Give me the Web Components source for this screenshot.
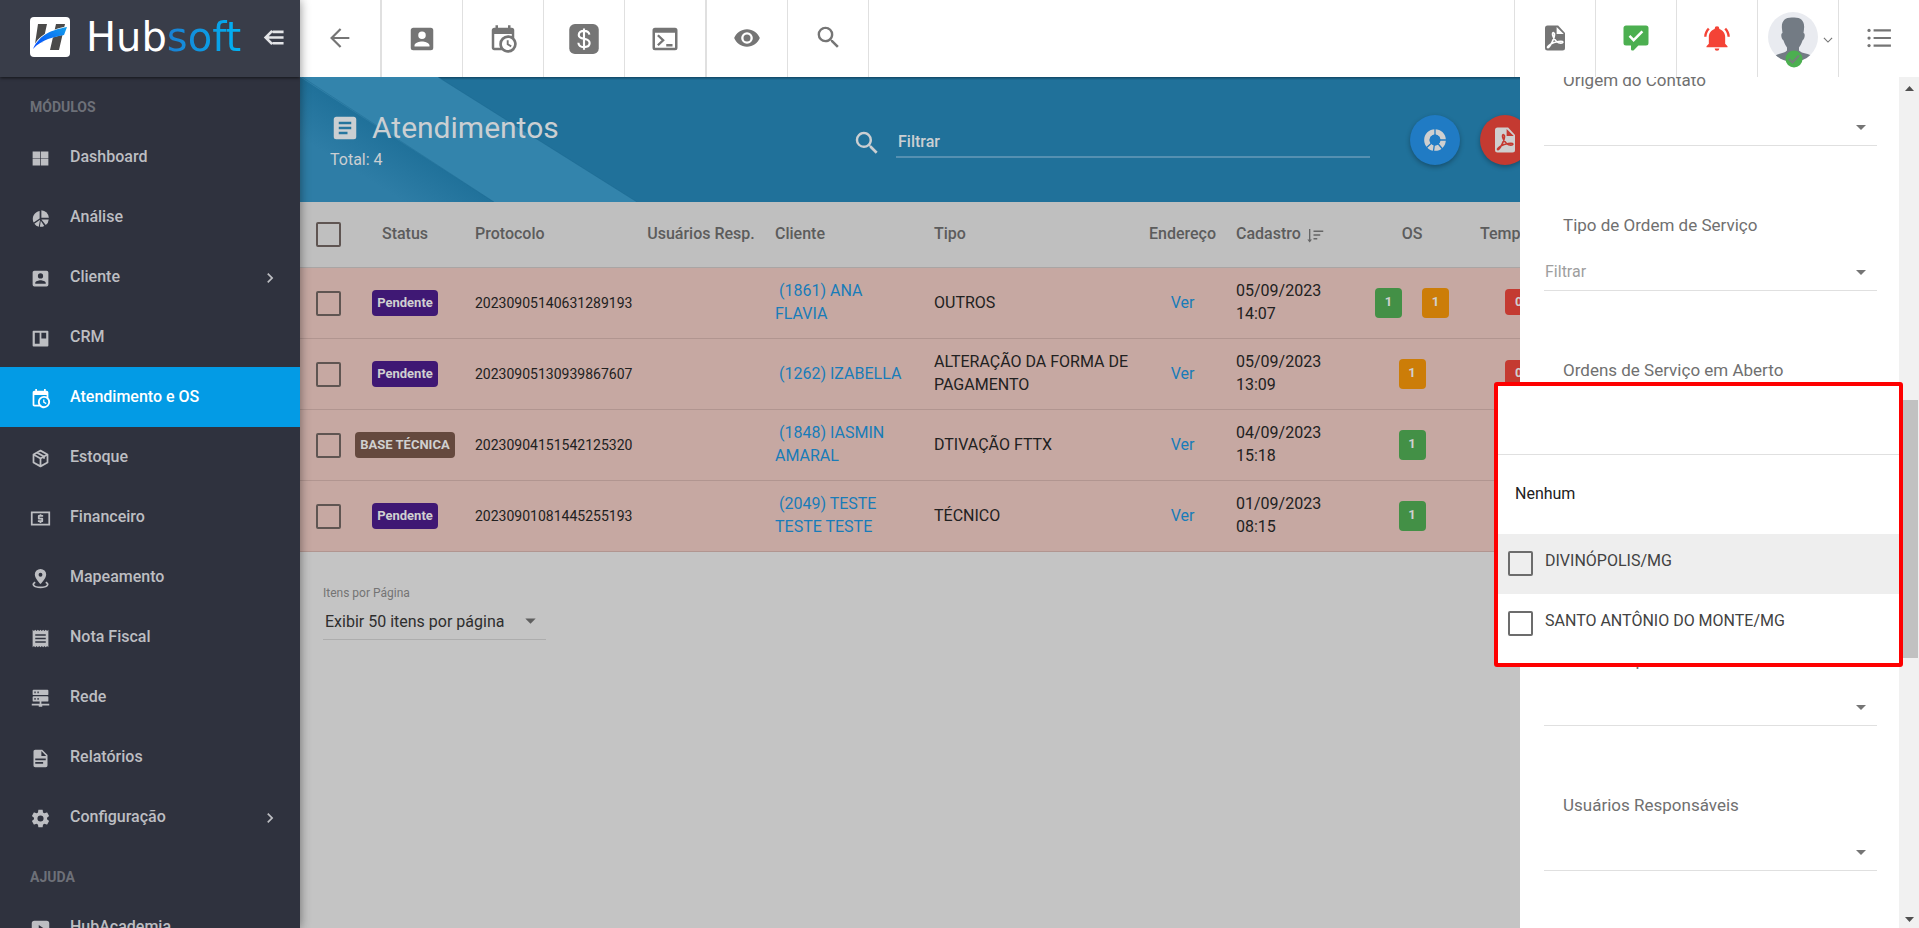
<!DOCTYPE html>
<html lang="pt-BR">
<head>
<meta charset="utf-8">
<title>Hubsoft - Atendimentos</title>
<style>
  html, body { margin: 0; height: 100%; }
  body { font-family: Roboto, "Noto Sans", sans-serif; font-size: 16px; color: #212121; overflow: hidden; }
</style>
</head>
<body>
<hs-app></hs-app>

<script>
const ICONS = {
  dashboard: '<path d="M3 4h8.6v7.6H3zM12.4 4H21v7.6h-8.600zM3 12.400h8.600V20H3zM12.400 12.400H21V20h-8.600z"/>',
  pie: '<path d="M13 2.500A9 9 0 0 1 21.500 11H13z"/><path d="M11 3.500V12L4.200 16.600A9 9 0 0 1 11 3.500zM11.500 13.500l-1.500 8A9 9 0 0 1 5 18zM13 13h8.400a9 9 0 0 1-3.400 6.500zM12.300 14.500l4 6a9 9 0 0 1-5 1z"/>',
  account: '<path d="M6,17C6,15 10,13.9 12,13.9C14,13.9 18,15 18,17V18H6M15,9A3,3 0 0,1 12,12A3,3 0 0,1 9,9A3,3 0 0,1 12,6A3,3 0 0,1 15,9M3,5V19A2,2 0 0,0 5,21H19A2,2 0 0,0 21,19V5A2,2 0 0,0 19,3H5C3.89,3 3,3.9 3,5Z"/>',
  board: '<path fill-rule="evenodd" d="M4 3H20A1 1 0 0 1 21 4V20A1 1 0 0 1 20 21H4A1 1 0 0 1 3 20V4A1 1 0 0 1 4 3M5.500 5.500V18H11V5.500zM13 5.500V12H18.500V5.500z"/>',
  calendar: '<path d="M15,13H16.5V15.82L18.94,17.23L18.19,18.53L15,16.69V13M19,8H5V19H9.67C9.24,18.09 9,17.07 9,16A7,7 0 0,1 16,9C17.07,9 18.09,9.24 19,9.67V8M5,21C3.89,21 3,20.1 3,19V5C3,3.89 3.89,3 5,3H6V1H8V3H16V1H18V3H19A2,2 0 0,1 21,5V11.1C22.24,12.36 23,14.09 23,16A7,7 0 0,1 16,23C14.09,23 12.36,22.24 11.1,21H5M16,11.15A4.85,4.85 0 0,0 11.15,16C11.15,18.68 13.32,20.85 16,20.85A4.85,4.85 0 0,0 20.85,16C20.85,13.32 18.68,11.15 16,11.15Z"/>',
  cube: '<path fill="none" stroke="currentColor" stroke-width="2" stroke-linejoin="round" d="M12 3l8 4.500v9L12 21l-8-4.500v-9zM4 7.500l8 4.500 8-4.500M12 12v9M8 5.300l8 4.500M16 9.800v2.500"/>',
  cash: '<path fill="none" stroke="currentColor" stroke-width="2" d="M2 5H22V19H2z"/><path d="M11 7h2v1h2v2h-4v1h3a1 1 0 0 1 1 1v3a1 1 0 0 1-1 1h-1v1h-2v-1H9v-2h4v-1h-3a1 1 0 0 1-1-1V9a1 1 0 0 1 1-1h1z"/>',
  pin: '<path fill-rule="evenodd" d="M12 1a6.500 6.500 0 0 1 6.500 6.500C18.500 12 12 18.500 12 18.500S5.500 12 5.500 7.500A6.500 6.500 0 0 1 12 1m0 4.500a2.200 2.200 0 1 0 0 4.400a2.200 2.200 0 0 0 0-4.400"/><path fill="none" stroke="currentColor" stroke-width="2" d="M6 16.200C1.500 18.500 4 22 12 22s10.500-3.500 6-5.800"/>',
  receipt: '<path fill-rule="evenodd" d="M3 2l1.500 1.300L6 2l1.500 1.300L9 2l1.500 1.300L12 2l1.500 1.300L15 2l1.500 1.300L18 2l1.500 1.300L21 2v20l-1.500-1.300L18 22l-1.500-1.300L15 22l-1.500-1.300L12 22l-1.500-1.300L9 22l-1.500-1.300L6 22l-1.500-1.300L3 22zM6 7v1.800h12V7zM6 11v1.800h12V11zM6 15v1.800h12V15z"/>',
  server: '<path fill-rule="evenodd" d="M4 2h16a1 1 0 0 1 1 1v4a1 1 0 0 1-1 1H4a1 1 0 0 1-1-1V3a1 1 0 0 1 1-1M5 4v2h1.500V4zM8.500 4v2H10V4zM4 9.500h16a1 1 0 0 1 1 1v4a1 1 0 0 1-1 1H4a1 1 0 0 1-1-1v-4a1 1 0 0 1 1-1M5 11.500v2h1.500v-2zM8.500 11.500v2H10v-2zM11 15.500h2V18h9v2h-8v1.500h-4V20H2v-2h9z"/>',
  file: '<path d="M13,9H18.5L13,3.5V9M6,2H14L20,8V20A2,2 0 0,1 18,22H6C4.89,22 4,21.1 4,20V4C4,2.89 4.89,2 6,2M15,18V16H6V18H15M18,14V12H6V14H18Z"/>',
  cog: '<path d="M12,15.5A3.5,3.5 0 0,1 8.5,12A3.5,3.5 0 0,1 12,8.5A3.5,3.5 0 0,1 15.5,12A3.5,3.5 0 0,1 12,15.5M19.43,12.97C19.47,12.65 19.5,12.33 19.5,12C19.5,11.67 19.47,11.34 19.43,11L21.54,9.37C21.73,9.22 21.78,8.95 21.66,8.73L19.66,5.27C19.54,5.05 19.27,4.96 19.05,5.05L16.56,6.05C16.04,5.66 15.5,5.32 14.87,5.07L14.5,2.42C14.46,2.18 14.25,2 14,2H10C9.75,2 9.54,2.18 9.5,2.42L9.13,5.07C8.5,5.32 7.96,5.66 7.44,6.05L4.95,5.05C4.73,4.96 4.46,5.05 4.34,5.27L2.34,8.73C2.21,8.95 2.27,9.22 2.46,9.37L4.57,11C4.53,11.34 4.5,11.67 4.5,12C4.5,12.33 4.53,12.65 4.57,12.97L2.46,14.63C2.27,14.78 2.21,15.05 2.34,15.27L4.34,18.73C4.46,18.95 4.73,19.03 4.95,18.95L7.44,17.94C7.96,18.34 8.5,18.68 9.13,18.93L9.5,21.58C9.54,21.82 9.75,22 10,22H14C14.25,22 14.46,21.82 14.5,21.58L14.87,18.93C15.5,18.67 16.04,18.34 16.56,17.94L19.05,18.95C19.27,19.03 19.54,18.95 19.66,18.73L21.66,15.27C21.78,15.05 21.73,14.78 21.54,14.63L19.43,12.97Z"/>',
  video: '<path fill-rule="evenodd" d="M5 3h14a3 3 0 0 1 3 3v12a3 3 0 0 1-3 3H5a3 3 0 0 1-3-3V6a3 3 0 0 1 3-3M10 8v8l6-4z"/>',
  chevron: '<path d="M8.590,16.580L13.170,12L8.590,7.410L10,6L16,12L10,18L8.590,16.580Z"/>',
  chevronDown: '<path fill="none" stroke="currentColor" stroke-width="2" d="M5 8.500l7 7 7-7"/>',
  back: '<path fill="none" stroke="currentColor" stroke-width="1.900" d="M20 12H5.500M12.500 4.300L4.800 12l7.700 7.700"/>',
  money: '<rect x="0.200" y="0" width="23.600" height="24" rx="4.500"/><path fill="none" stroke="#fff" stroke-width="1.700" d="M16.300 8.500C16 6.300 14.500 5.500 12 5.500S7.800 6.700 7.800 8.700C7.800 13.200 16.500 10.500 16.500 15.200C16.500 17.300 14.800 18.500 12 18.500S7.700 17.300 7.500 15M12 3.500v17"/>',
  console: '<path fill-rule="evenodd" d="M4 3H20A2 2 0 0 1 22 5V19A2 2 0 0 1 20 21H4A2 2 0 0 1 2 19V5A2 2 0 0 1 4 3M4 7V19H20V7z"/><path fill="none" stroke="currentColor" stroke-width="1.900" d="M6.300 9l4.200 4-4.200 4M13 17h5"/>',
  eye: '<path d="M12,9A3,3 0 0,0 9,12A3,3 0 0,0 12,15A3,3 0 0,0 15,12A3,3 0 0,0 12,9M12,17A5,5 0 0,1 7,12A5,5 0 0,1 12,7A5,5 0 0,1 17,12A5,5 0 0,1 12,17M12,4.5C7,4.5 2.73,7.61 1,12C2.73,16.39 7,19.5 12,19.5C17,19.5 21.27,16.39 23,12C21.27,7.61 17,4.5 12,4.5Z"/>',
  magnify: '<path d="M9.5,3A6.5,6.5 0 0,1 16,9.5C16,11.11 15.41,12.59 14.44,13.73L14.71,14H15.5L20.5,19L19,20.5L14,15.5V14.71L13.73,14.44C12.59,15.41 11.11,16 9.5,16A6.5,6.5 0 0,1 3,9.5A6.5,6.5 0 0,1 9.5,3M9.5,5C7,5 5,7 5,9.5C5,12 7,14 9.5,14C12,14 14,12 14,9.5C14,7 12,5 9.5,5Z"/>',
  pdf: '<path d="M6 2H14.500L20 8V20A2 2 0 0 1 18 22H6A2 2 0 0 1 4 20V4A2 2 0 0 1 6 2"/><path fill="var(--icon-cut,#fff)" d="M13.300 3.200V8.800H19z"/><path fill="none" stroke="var(--icon-cut,#fff)" stroke-width="1.300" stroke-linejoin="round" d="M10.900 7.800C9.300 7 9.800 12.200 13.300 14.900C15.500 16.600 18.500 16.300 18.300 15.200C18 14 12 14.800 8.500 16.900C6 18.400 5.500 19.700 6.400 19.700C8 19.500 11.800 12 11.600 8.800C11.500 8.200 11.300 7.900 10.900 7.800z"/>',
  chat: '<path d="M9,22A1,1 0 0,1 8,21V18H4A2,2 0 0,1 2,16V4C2,2.89 2.9,2 4,2H20A2,2 0 0,1 22,4V16A2,2 0 0,1 20,18H13.9L10.2,21.71C10,21.9 9.75,22 9.5,22H9"/><path fill="none" stroke="#fff" stroke-width="2" d="M6.800 10.300l3.300 3.400 7-7"/>',
  bell: '<path d="M21,19V20H3V19L5,17V11C5,7.9 7.03,5.17 10,4.29C10,4.19 10,4.1 10,4A2,2 0 0,1 12,2A2,2 0 0,1 14,4C14,4.1 14,4.19 14,4.29C16.97,5.17 19,7.9 19,11V17L21,19M14,21A2,2 0 0,1 12,23A2,2 0 0,1 10,21M19.75,3.19L18.33,4.61C20.04,6.3 21,8.6 21,11H23C23,8.07 21.84,5.25 19.75,3.19M1,11H3C3,8.6 3.96,6.3 5.67,4.61L4.25,3.19C2.16,5.25 1,8.07 1,11Z"/>',
  list: '<path d="M7 4H23V6H7zM7 11H23V13H7zM7 18H23V20H7z"/><circle cx="2.800" cy="5" r="1.500"/><circle cx="2.800" cy="12" r="1.500"/><circle cx="2.800" cy="19" r="1.500"/>',
  article: '<path d="M14,17H7V15H14M17,13H7V11H17M17,9H7V7H17M19,3H5C3.89,3 3,3.89 3,5V19A2,2 0 0,0 5,21H19A2,2 0 0,0 21,19V5C21,3.89 20.1,3 19,3Z"/>',
  donut: '<circle cx="12" cy="12" r="7.500" fill="none" stroke="currentColor" stroke-width="5"/><path stroke="var(--icon-cut)" stroke-width="1.200" d="M12 12V1M12 12H23M12 12l7.500 9M12 12l-1.500 11M12 12l-9 8"/><circle cx="12" cy="12" r="5" fill="var(--icon-cut)"/>',
  sort: '<path d="M4 4h1.800v14h2.200L4.900 22 1.800 18H4zM10 6h13v2H10zM10 11h9v2h-9zM10 16h5v2h-5z"/>',
  collapse: '<path fill="none" stroke="currentColor" stroke-width="3" d="M10.500 4.500L3 12l7.500 7.500M4 12h19.500M11 5.500h12.500M11 18.500h12.500"/>',
  caret: '<path d="M7,10L12,15L17,10H7Z"/>'
};

const define = (name, css, html) => customElements.define(name, class extends HTMLElement {
  constructor() {
    super();
    this.attachShadow({ mode: 'open' });
  }
  connectedCallback() {
    const markup = typeof html === 'function' ? html(this) : html;
    this.shadowRoot.innerHTML = `<style>*{box-sizing:border-box}${css}</style>${markup}`;
  }
});

define('hs-icon', `
  :host { display: inline-block; flex: none; }
  svg { display: block; fill: currentColor; }`,
  el => {
    const s = el.getAttribute('size') || 24;
    return `<svg width="${s}" height="${s}" viewBox="0 0 24 24" aria-hidden="true">${ICONS[el.getAttribute('name')]}</svg>`;
  });

/* Sidebar */
define('hs-nav-item', `
  :host { display: block; }
  a { display: flex; align-items: center; height: 60px; padding: 0 20px 0 30px; color: #bdbec2; font-weight: 500; text-decoration: none; }
  a.active { background: #039be5; color: #fff; }
  hs-icon { padding-top: 2px; }
  span { flex: 1; padding: 0 0 2px 19px; }`,
  el => `<a href="#" class="${el.hasAttribute('active') ? 'active' : ''}">
    <hs-icon name="${el.getAttribute('icon')}" size="21"></hs-icon>
    <span><slot></slot></span>
    ${el.hasAttribute('more') ? '<hs-icon name="chevron" size="20"></hs-icon>' : ''}
  </a>`);

define('hs-brand', `
  :host { display: flex; align-items: center; height: 77px; padding: 0 16px 3px 30px; background: #393d49; color: #fff;
    box-shadow: 0 1px 3px rgba(0,0,0,.6); position: relative; }
  .tile { flex: none; display: block; }
  .word { flex: 1; padding-left: 16px; font: 40px/44px "DejaVu Sans", sans-serif; }
  .soft { background: linear-gradient(90deg, #1b7fd1, #00b2f3); -webkit-background-clip: text; background-clip: text; color: transparent; }
  button { border: 0; padding: 3px 0 0; background: none; color: #e4e5e8; }`,
  `<svg class="tile" width="40" height="40" viewBox="0 0 40 40" aria-hidden="true">
    <defs><linearGradient id="g" x1="0" y1="1" x2="1" y2="0"><stop offset="0" stop-color="#0448ff"/><stop offset="1" stop-color="#13a0ea"/></linearGradient></defs>
    <rect width="40" height="40" rx="4" fill="#fff"/>
    <path fill="#4b4a49" d="M8 7h9l-4 18-8 2zM26 7h9l-6 26h-9z"/>
    <path fill="#fff" d="M2 33C8 17 20 13 38 9l-2 8c-10 3-23 4-34 17z"/>
    <path fill="url(#g)" d="M3 32C10 17 22 13 37 10l-3 8C24 20 12 22 3 32z"/>
  </svg>
  <div class="word">Hub<span class="soft">soft</span></div>
  <button aria-label="Recolher menu"><hs-icon name="collapse" size="21"></hs-icon></button>`);

define('hs-sidebar', `
  :host { display: block; background: #2f323e; overflow: hidden; height: 100%; }
  h2 { margin: 0; height: 50px; padding: 20px 30px 0; font-size: 14px; line-height: 20px; font-weight: 700; color: #6d7078; }`,
  `<hs-brand></hs-brand>
  <nav aria-label="Principal">
    <h2>MÓDULOS</h2>
    <hs-nav-item icon="dashboard">Dashboard</hs-nav-item>
    <hs-nav-item icon="pie">Análise</hs-nav-item>
    <hs-nav-item icon="account" more>Cliente</hs-nav-item>
    <hs-nav-item icon="board">CRM</hs-nav-item>
    <hs-nav-item icon="calendar" active>Atendimento e OS</hs-nav-item>
    <hs-nav-item icon="cube">Estoque</hs-nav-item>
    <hs-nav-item icon="cash">Financeiro</hs-nav-item>
    <hs-nav-item icon="pin">Mapeamento</hs-nav-item>
    <hs-nav-item icon="receipt">Nota Fiscal</hs-nav-item>
    <hs-nav-item icon="server">Rede</hs-nav-item>
    <hs-nav-item icon="file">Relatórios</hs-nav-item>
    <hs-nav-item icon="cog" more>Configuração</hs-nav-item>
    <h2>AJUDA</h2>
    <hs-nav-item icon="video">HubAcademia</hs-nav-item>
  </nav>`);

/* Top bar */
define('hs-tool', `
  :host { display: block; width: 81px; border-right: 1px solid #e0e0e0; }
  :host([wide]) { width: 82px; border-right-width: 2px; }
  :host([last]) { width: 80px; border: 0; }
  button { display: flex; align-items: center; justify-content: center; width: 100%; height: 100%; border: 0; padding: 0; background: none; color: inherit; }
  :host([raised]) button { padding-bottom: 2px; }`,
  el => `<button aria-label="${el.getAttribute('label')}"><hs-icon name="${el.getAttribute('icon')}" size="${el.getAttribute('size') || 30}"></hs-icon></button>`);

define('hs-user', `
  :host { display: block; width: 81px; border-right: 1px solid #e0e0e0; }
  button { display: flex; align-items: center; gap: 3px; width: 100%; height: 100%; border: 0; padding: 2px 0 0 10px; background: none; color: #757575; }
  svg { display: block; flex: none; }`,
  `<button aria-label="Usuário">
    <svg width="50" height="56" viewBox="0 0 50 56" aria-hidden="true">
      <clipPath id="c"><circle cx="25" cy="25" r="25"/></clipPath>
      <circle cx="25" cy="25" r="25" fill="#e9ebf0"/>
      <path clip-path="url(#c)" fill="#737b84" d="M14 17C13 9 17 5 25 5.500C33 5 37 9 36 17l-.5 4c2 0 1.500 6-1 7.500C33.500 32 32 34 31 35.500v3C34 42 41 41 45 45L25 58 5 45C9 41 16 42 19 38.500v-3C18 34 16.500 32 15.500 28.500C13 27 12.500 21 14.500 21z"/>
      <circle cx="26" cy="47" r="8.500" fill="#4caf50"/>
      <path fill="none" stroke="#73807a" stroke-width="2" d="M21 47l3.500 3.500 6.500-7"/>
    </svg>
    <hs-icon name="chevronDown" size="14"></hs-icon>
  </button>`);

define('hs-toolbar', `
  :host { display: flex; height: 77px; background: #fff; color: #757575; }
  .space { flex: 1; border-right: 1px solid #e0e0e0; }
  .green { color: #4caf50; } .red { color: #f44336; }`,
  `<hs-tool wide raised icon="back" size="28" label="Voltar"></hs-tool>
  <hs-tool icon="account" label="Cliente"></hs-tool>
  <hs-tool icon="calendar" label="Atendimento"></hs-tool>
  <hs-tool icon="money" label="Financeiro"></hs-tool>
  <hs-tool wide icon="console" label="Terminal"></hs-tool>
  <hs-tool raised icon="eye" size="28" label="Visualizar"></hs-tool>
  <hs-tool raised icon="magnify" size="29" label="Pesquisar"></hs-tool>
  <div class="space"></div>
  <hs-tool raised icon="pdf" label="PDF"></hs-tool>
  <hs-tool raised class="green" icon="chat" label="Mensagens"></hs-tool>
  <hs-tool raised class="red" icon="bell" size="28" label="Notificações"></hs-tool>
  <hs-user></hs-user>
  <hs-tool last raised icon="list" size="26" label="Menu"></hs-tool>`);

/* Page heading */
define('hs-page-header', `
  :host { display: grid; grid-template-columns: 552px 518px 1fr; align-items: center; height: 125px; color: #cbcfd2; --blue: #20719a;
    background: linear-gradient(180deg, rgba(0,30,50,.5) 0, transparent 3px), var(--blue); position: relative; isolation: isolate; }
  .bands { position: absolute; inset: 0 auto 0 0; z-index: -1; }
  .title { padding: 0 0 2px 30px; }
  h1 { margin: 0; display: flex; align-items: center; gap: 12px; font-size: 30px; line-height: 40px; font-weight: 400; }
  p { margin: 2px 0 0; line-height: 20px; }
  .search { display: flex; align-items: center; gap: 14px; padding-top: 4px; }
  .search hs-icon { padding-top: 2px; }
  input { flex: 1; min-width: 0; height: 32px; border: 0; border-bottom: 2px solid #5590b1; padding: 2px 2px 0; background: none; color: inherit; font: 500 16px Roboto, sans-serif; outline: 0; }
  input::placeholder { color: inherit; opacity: 1; }
  .actions { display: flex; gap: 20px; padding-left: 40px; }
  .actions button { width: 50px; height: 50px; border: 0; border-radius: 50%; padding: 0; display: flex; align-items: center; justify-content: center; color: #cfcfcf;
    background: var(--icon-cut); box-shadow: 0 2px 5px rgba(0,0,0,.3); }
  .b { --icon-cut: #207bc4; } .r { --icon-cut: #c43a31; }`,
  `<svg class="bands" width="340" height="125" viewBox="0 0 340 125" aria-hidden="true">
    <defs><linearGradient id="s" gradientUnits="userSpaceOnUse" x1="96" y1="62" x2="70" y2="104"><stop offset="0" stop-color="#20719a"/><stop offset="1" stop-color="#2e7da6"/></linearGradient></defs>
    <path fill="url(#s)" d="M0 0H4L194 125H0z"/><path fill="#3384ac" d="M0 0H138L337 125H194z"/>
    <path fill="none" stroke="#1a658b" stroke-opacity=".4" d="M138 0L337 125M2 0L194 125"/>
  </svg>
  <div class="title"><h1><hs-icon name="article" size="30"></hs-icon><span>Atendimentos</span></h1><p>Total: 4</p></div>
  <div class="search"><hs-icon name="magnify" size="30"></hs-icon><input type="text" placeholder="Filtrar" aria-label="Filtrar"></div>
  <div class="actions"><button class="b" aria-label="Gráfico"><hs-icon name="donut" size="26"></hs-icon></button><button class="r" aria-label="Exportar PDF"><hs-icon name="pdf" size="30"></hs-icon></button></div>`);

/* Table */
define('hs-badge', `
  :host { display: inline-block; height: 26px; padding: 0 5px; border-radius: 4px; font-size: 13px; line-height: 25px; font-weight: 700; color: #d0d0d0; background: #c43a31; vertical-align: middle; white-space: nowrap; }
  :host([tone=purple]) { background: #3f1874; }
  :host([tone=brown]) { background: #65493e; }
  :host([tone=green]), :host([tone=orange]) { height: 30px; width: 27px; padding: 0; text-align: center; line-height: 28px; margin: 0 10px; background: #439046; }
  :host([tone=orange]) { background: #cc7d08; }
  :host([tone=red]) { margin-left: 25px; padding: 0 10px; }`,
  '<slot></slot>');

const ROWS = [
  ['purple', 'Pendente', '20230905140631289193', '(1861) ANA FLAVIA', 'OUTROS', '05/09/2023 14:07', ['green', 'orange'], '0'],
  ['purple', 'Pendente', '20230905130939867607', '(1262) IZABELLA', 'ALTERAÇÃO DA FORMA DE PAGAMENTO', '05/09/2023 13:09', ['orange'], '0'],
  ['brown', 'BASE TÉCNICA', '20230904151542125320', '(1848) IASMIN AMARAL', 'DTIVAÇÃO FTTX', '04/09/2023 15:18', ['green'], ''],
  ['purple', 'Pendente', '20230901081445255193', '(2049) TESTE TESTE TESTE', 'TÉCNICO', '01/09/2023 08:15', ['green'], '']
];
const CHECK = `
  input[type=checkbox] { appearance: none; display: block; flex: none; margin: 0; width: 25px; height: 25px; border: 2px solid currentColor; border-radius: 2px; color: inherit; }`;

define('hs-table', `
  :host { display: block; overflow: hidden; }
  table { width: 100%; table-layout: fixed; border-spacing: 0; }
  col:nth-child(1) { width: 45px; } col:nth-child(2) { width: 120px; } col:nth-child(3) { width: 172px; }
  col:nth-child(4) { width: 128px; } col:nth-child(5) { width: 159px; } col:nth-child(6) { width: 215px; }
  col:nth-child(7) { width: 87px; } col:nth-child(8) { width: 128px; } col:nth-child(9) { width: 116px; }
  th, td { padding: 0 4px 0 10px; text-align: left; line-height: 23px; vertical-align: middle; border-bottom: 1px solid #b19590; }
  th { height: 66px; background: #bfbfbf; color: #5c5c5c; font-weight: 500; white-space: nowrap; border-color: #a9a5a4; }
  th span { display: block; padding-bottom: 3px; }
  td { height: 71px; background: #c6a8a2; padding-bottom: 2px; }
  th:first-child, td:first-child { padding: 0 0 0 16px; color: #5f5552; }
  .c { text-align: center; padding: 0; }
  td.c.text { padding-bottom: 2px; }
  .num { font-size: 14px; padding: 0 0 0 10px; }
  .sort { color: #666; vertical-align: middle; padding: 2px 0 0 5px; }
  a { color: #187cb9; text-decoration: none; display: block; }
  .client { text-indent: 4px; padding-right: 6px; }
  ${CHECK}`,
  `<table>
    <colgroup><col><col><col><col><col><col><col><col><col><col></colgroup>
    <thead><tr>
      <th><input type="checkbox" aria-label="Selecionar todos"></th><th class="c"><span>Status</span></th><th><span>Protocolo</span></th><th class="c"><span>Usuários Resp.</span></th>
      <th><span>Cliente</span></th><th><span>Tipo</span></th><th class="c"><span>Endereço</span></th><th><span>Cadastro<hs-icon class="sort" name="sort" size="18"></hs-icon></span></th><th class="c"><span>OS</span></th><th><span>Tempo</span></th>
    </tr></thead>
    <tbody>${ROWS.map(([tone, st, prot, cli, tipo, cad, os, t]) => `<tr>
      <td><input type="checkbox" aria-label="Selecionar ${prot}"></td><td class="c"><hs-badge tone="${tone}">${st}</hs-badge></td>
      <td class="num">${prot}</td><td></td><td><a class="client" href="#">${cli}</a></td><td>${tipo}</td><td class="c text"><a href="#">Ver</a></td>
      <td>${cad.replace(' ', '<br>')}</td><td class="c">${os.map(o => `<hs-badge tone="${o}">1</hs-badge>`).join('')}</td><td>${t ? `<hs-badge tone="red">${t}</hs-badge>` : ''}</td>
    </tr>`).join('')}</tbody>
  </table>`);

define('hs-pager', `
  :host { display: block; padding: 33px 23px; }
  label { display: block; font-size: 12px; line-height: 16px; color: #747474; }
  .box { display: grid; width: 223px; height: 39px; border-bottom: 1px solid #adadad; color: #5f5f5f; align-items: center; }
  .box > * { grid-area: 1 / 1; }
  select { appearance: none; border: 0; background: none; width: 100%; padding: 2px 0 0 2px; font: 16px Roboto, sans-serif; color: #2e2e2e; }
  hs-icon { justify-self: end; padding-right: 3px; pointer-events: none; }`,
  `<label for="n">Itens por Página</label>
  <div class="box"><select id="n"><option>Exibir 50 itens por página</option></select><hs-icon name="caret" size="25"></hs-icon></div>`);

/* Filter drawer */
define('hs-field', `
  :host { display: block; height: 145px; flex: none; }
  label { display: block; padding-left: 19px; font-size: 17px; line-height: 24px; color: #707070; }
  .box { display: grid; align-items: center; margin-top: 18px; height: 36px; padding-bottom: 2px; border-bottom: 1px solid #e0e0e0; color: #757575; }
  .box > * { grid-area: 1 / 1; }
  select { appearance: none; border: 0; width: 100%; background: none; padding: 0 0 0 1px; font: 16px Roboto, sans-serif; color: #9e9e9e; }
  hs-icon { justify-self: end; padding-right: 4px; pointer-events: none; }`,
  el => `<label for="f">${el.getAttribute('label')}</label>
  <div class="box"><select id="f"><option>${el.getAttribute('value') || ''}</option></select><hs-icon name="caret" size="24"></hs-icon></div>`);

define('hs-scrollbar', `
  :host { display: flex; flex-direction: column; width: 20px; background: #f1f1f1; color: #505050; }
  svg { display: block; fill: currentColor; }
  .before { flex: 303; } .thumb { flex: 258; margin: 0 1px 0 2px; background: #c1c1c1; } .after { flex: 250; }`,
  `<svg width="20" height="20" aria-hidden="true"><path d="M6 14H15L10.500 9z"/></svg>
  <div class="before"></div><div class="thumb"></div><div class="after"></div>
  <svg width="20" height="20" aria-hidden="true"><path d="M6 9H15L10.500 14z"/></svg>`);

define('hs-drawer', `
  :host { display: flex; background: #fff; overflow: hidden; }
  .fields { flex: 1; display: flex; flex-direction: column; margin-top: -9px; padding: 0 22px 0 24px; }`,
  `<div class="fields">
    <hs-field label="Origem do Contato"></hs-field>
    <hs-field label="Tipo de Ordem de Serviço" value="Filtrar"></hs-field>
    <hs-field label="Ordens de Serviço em Aberto"></hs-field>
    <hs-field label="Cidade"></hs-field>
    <hs-field label="Setor Responsável"></hs-field>
    <hs-field label="Usuários Responsáveis"></hs-field>
  </div>
  <hs-scrollbar></hs-scrollbar>`);

define('hs-options', `
  :host { display: block; background: #fff; border: 4px solid #fe0000; border-radius: 3px; box-sizing: border-box; padding-bottom: 9px; }
  .find { display: block; width: 100%; height: 69px; border: 0; border-bottom: 1px solid #e0e0e0; padding: 0 17px; font: 16px Roboto, sans-serif; outline: 0; }
  .none { display: block; width: 100%; height: 79px; border: 0; background: none; padding: 0 17px 2px; text-align: left; font: 16px Roboto, sans-serif; color: #212121; }
  label { display: flex; gap: 12px; height: 60px; padding: 17px 10px 0; color: #424242; line-height: 20px; }
  label.hover { background: #eee; }
  ${CHECK} input[type=checkbox] { color: #6c6c6c; }`,
  `<input class="find" type="text" aria-label="Buscar cidade">
  <button class="none">Nenhum</button>
  <label class="hover"><input type="checkbox"><span>DIVINÓPOLIS/MG</span></label>
  <label><input type="checkbox"><span>SANTO ANTÔNIO DO MONTE/MG</span></label>`);

define('hs-app', `
  :host { display: grid; grid-template: auto 1fr / 300px 1fr; height: 100vh; overflow: hidden; }
  hs-sidebar { grid-row: 1 / 3; min-height: 0; position: relative; z-index: 2; box-shadow: 0 0 10px rgba(0,0,0,.45); }
  main { position: relative; min-height: 0; min-width: 0; background: #c4c4c4; }
  hs-drawer { position: absolute; top: 0; right: 0; bottom: 0; width: 399px; }
  hs-options { position: absolute; top: 305px; right: 16px; width: 409px; }`,
  `<hs-sidebar></hs-sidebar>
  <hs-toolbar></hs-toolbar>
  <main>
    <hs-page-header></hs-page-header>
    <hs-table></hs-table>
    <hs-pager></hs-pager>
    <hs-drawer></hs-drawer>
    <hs-options></hs-options>
  </main>`);
</script>
</body>
</html>
